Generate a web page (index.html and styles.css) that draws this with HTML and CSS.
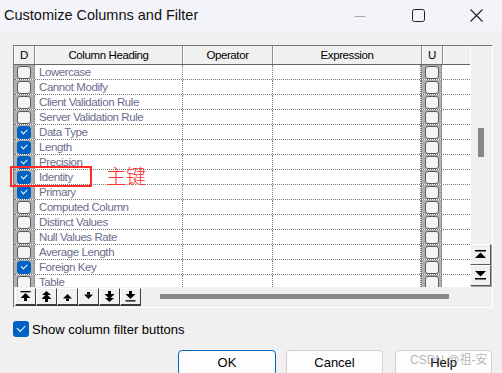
FILE: index.html
```html
<!DOCTYPE html>
<html>
<head>
<meta charset="utf-8">
<link rel="stylesheet" href="styles.css">
</head>
<body>
<div class="titlebar">
  <div class="title">Customize Columns and Filter</div>
  <div class="ctl"><svg width="12" height="12" viewBox="0 0 12 12"><line x1="0.5" y1="6.5" x2="11.5" y2="6.5" stroke="#a8a8a8" stroke-width="1"/></svg></div>
  <div class="ctl"><svg width="13" height="13" viewBox="0 0 13 13"><rect x="0.5" y="0.5" width="12" height="12" rx="2" fill="none" stroke="#1e1e1e" stroke-width="1"/></svg></div>
  <div class="ctl last"><svg width="13" height="13" viewBox="0 0 13 13"><path d="M0.5 0.5 L12.5 12.5 M12.5 0.5 L0.5 12.5" stroke="#1e1e1e" stroke-width="1.1"/></svg></div>
</div>

<div class="content">
  <div class="frame">
    <div class="main">
      <div class="grid">
        <div class="hrow">
          <div class="hc c-d">D</div>
          <div class="hc c-h">Column Heading</div>
          <div class="hc c-o">Operator</div>
          <div class="hc c-e">Expression</div>
          <div class="hc c-u">U</div>
          <div class="hc c-r"></div>
        </div>
        <div class="rows">
          <div class="row"><div class="c c-d g"><span class="cb"></span></div><div class="c c-h">Lowercase</div><div class="c c-o"></div><div class="c c-e"></div><div class="c c-u g"><span class="cb"></span></div><div class="c c-r"></div></div>
          <div class="row"><div class="c c-d g"><span class="cb"></span></div><div class="c c-h">Cannot Modify</div><div class="c c-o"></div><div class="c c-e"></div><div class="c c-u g"><span class="cb"></span></div><div class="c c-r"></div></div>
          <div class="row"><div class="c c-d g"><span class="cb"></span></div><div class="c c-h">Client Validation Rule</div><div class="c c-o"></div><div class="c c-e"></div><div class="c c-u g"><span class="cb"></span></div><div class="c c-r"></div></div>
          <div class="row"><div class="c c-d g"><span class="cb"></span></div><div class="c c-h">Server Validation Rule</div><div class="c c-o"></div><div class="c c-e"></div><div class="c c-u g"><span class="cb"></span></div><div class="c c-r"></div></div>
          <div class="row"><div class="c c-d g"><span class="cb on"></span></div><div class="c c-h">Data Type</div><div class="c c-o"></div><div class="c c-e"></div><div class="c c-u g"><span class="cb"></span></div><div class="c c-r"></div></div>
          <div class="row"><div class="c c-d g"><span class="cb on"></span></div><div class="c c-h">Length</div><div class="c c-o"></div><div class="c c-e"></div><div class="c c-u g"><span class="cb"></span></div><div class="c c-r"></div></div>
          <div class="row"><div class="c c-d g"><span class="cb on"></span></div><div class="c c-h">Precision</div><div class="c c-o"></div><div class="c c-e"></div><div class="c c-u g"><span class="cb"></span></div><div class="c c-r"></div></div>
          <div class="row"><div class="c c-d g"><span class="cb on"></span></div><div class="c c-h">Identity</div><div class="c c-o"></div><div class="c c-e"></div><div class="c c-u g"><span class="cb"></span></div><div class="c c-r"></div></div>
          <div class="row"><div class="c c-d g"><span class="cb on"></span></div><div class="c c-h">Primary</div><div class="c c-o"></div><div class="c c-e"></div><div class="c c-u g"><span class="cb"></span></div><div class="c c-r"></div></div>
          <div class="row"><div class="c c-d g"><span class="cb"></span></div><div class="c c-h">Computed Column</div><div class="c c-o"></div><div class="c c-e"></div><div class="c c-u g"><span class="cb"></span></div><div class="c c-r"></div></div>
          <div class="row"><div class="c c-d g"><span class="cb"></span></div><div class="c c-h">Distinct Values</div><div class="c c-o"></div><div class="c c-e"></div><div class="c c-u g"><span class="cb"></span></div><div class="c c-r"></div></div>
          <div class="row"><div class="c c-d g"><span class="cb"></span></div><div class="c c-h">Null Values Rate</div><div class="c c-o"></div><div class="c c-e"></div><div class="c c-u g"><span class="cb"></span></div><div class="c c-r"></div></div>
          <div class="row"><div class="c c-d g"><span class="cb"></span></div><div class="c c-h">Average Length</div><div class="c c-o"></div><div class="c c-e"></div><div class="c c-u g"><span class="cb"></span></div><div class="c c-r"></div></div>
          <div class="row"><div class="c c-d g"><span class="cb on"></span></div><div class="c c-h">Foreign Key</div><div class="c c-o"></div><div class="c c-e"></div><div class="c c-u g"><span class="cb"></span></div><div class="c c-r"></div></div>
          <div class="row"><div class="c c-d g"><span class="cb"></span></div><div class="c c-h">Table</div><div class="c c-o"></div><div class="c c-e"></div><div class="c c-u g"><span class="cb"></span></div><div class="c c-r"></div></div>
        </div>
      </div>
      <div class="vbar">
        <div class="track"><div class="vthumb"></div></div>
        <div class="vbtn"><svg width="11" height="9" viewBox="0 0 11 9"><rect x="0" y="0" width="11" height="1.5" fill="#000"/><polygon points="5.5,2.5 11,8 0,8" fill="#000"/></svg></div>
        <div class="vbtn"><svg width="11" height="9" viewBox="0 0 11 9"><polygon points="0,0 11,0 5.5,5.5" fill="#000"/><rect x="0" y="7" width="11" height="1.5" fill="#000"/></svg></div>
      </div>
    </div>
    <div class="hbar">
      <div class="tools">
        <div class="tb"><svg width="11" height="11" viewBox="0 0 11 11"><rect x="0.5" y="0" width="10" height="1.3" fill="#000"/><polygon points="5.5,2 10.5,7 0.5,7" fill="#000"/><rect x="4" y="7" width="3" height="3" fill="#000"/></svg></div>
        <div class="tb"><svg width="11" height="11" viewBox="0 0 11 11"><polygon points="5.5,0 10,4 1,4" fill="#000"/><polygon points="5.5,3 10.5,8 0.5,8" fill="#000"/><rect x="4" y="8" width="3" height="3" fill="#000"/></svg></div>
        <div class="tb"><svg width="11" height="11" viewBox="0 0 11 11"><polygon points="5.5,3 10,7.5 1,7.5" fill="#000"/><rect x="4" y="7.5" width="3" height="2.5" fill="#000"/></svg></div>
        <div class="tb"><svg width="11" height="11" viewBox="0 0 11 11"><rect x="4" y="1" width="3" height="2.5" fill="#000"/><polygon points="1,3.5 10,3.5 5.5,8" fill="#000"/></svg></div>
        <div class="tb"><svg width="11" height="11" viewBox="0 0 11 11"><rect x="4" y="0" width="3" height="3" fill="#000"/><polygon points="0.5,3 10.5,3 5.5,8" fill="#000"/><polygon points="1,7 10,7 5.5,11" fill="#000"/></svg></div>
        <div class="tb"><svg width="11" height="11" viewBox="0 0 11 11"><rect x="4" y="0" width="3" height="3" fill="#000"/><polygon points="0.5,3 10.5,3 5.5,8" fill="#000"/><rect x="0.5" y="9.2" width="10" height="1.3" fill="#000"/></svg></div>
      </div>
      <div class="hthumb"></div>
    </div>
  </div>

  <div class="showrow">
    <span class="bigcb"></span>
    <span class="showlabel">Show column filter buttons</span>
  </div>

  <div class="buttons">
    <div class="btn ok">OK</div>
    <div class="btn cancel">Cancel</div>
    <div class="btn help">Help</div>
  </div>
</div>

<div class="redbox"></div>
<div class="note">主键</div>
<div class="watermark">CSDN @祖-安</div>
</body>
</html>
```

FILE: styles.css
```css
html, body {
  margin: 0;
  padding: 0;
}
body {
  width: 502px;
  height: 373px;
  overflow: hidden;
  background: #f0f0f0;
  font-family: "Liberation Sans", Arial, sans-serif;
  position: relative;
}

/* title bar */
.titlebar {
  height: 31px;
  background: #f3f4f9;
  display: flex;
  align-items: center;
}
.title {
  flex: 1;
  padding-left: 4px;
  font-size: 14.5px;
  line-height: 31px;
  color: #111;
}
.ctl {
  width: 58px;
  height: 31px;
  display: flex;
  align-items: center;
  justify-content: center;
}
.ctl.last {
  margin-right: -3px;
}

/* content */
.content {
  padding: 14px 0 0 13px;
}
.frame {
  width: 480px;
  height: 263px;
  box-sizing: border-box;
  border: 1px solid;
  border-color: #7a7a7a #ffffff #ffffff #7a7a7a;
  display: flex;
  flex-direction: column;
}
.main {
  display: flex;
  height: 241px;
}
.grid {
  width: 456px;
  background: #ffffff;
  display: flex;
  flex-direction: column;
  overflow: hidden;
}
.hrow {
  display: flex;
  height: 18px;
  background: #f0f0f0;
  border-bottom: 1px solid #646464;
  flex: none;
}
.hc {
  box-sizing: border-box;
  font-size: 11.5px;
  letter-spacing: -0.4px;
  line-height: 19px;
  text-align: center;
  color: #000;
  border-right: 1px solid #8c8c8c;
  box-shadow: inset 1px 0 #ffffff;
}
.hc.c-r {
  border-right: none;
}
.c-d { width: 21px; }
.c-h { width: 148px; }
.c-o { width: 90px; }
.c-e { width: 149px; }
.c-u { width: 21px; }
.c-r { width: 27px; }

.rows {
  flex: 1;
  overflow: hidden;
}
.row {
  display: flex;
  height: 15px;
  box-sizing: border-box;
  border-bottom: 1px dotted #7c7c7c;
}
.c {
  box-sizing: border-box;
  height: 14px;
  border-right: 1px dotted #7c7c7c;
  font-size: 11.5px;
  letter-spacing: -0.42px;
  line-height: 15px;
  color: #6c6c8c;
  white-space: nowrap;
  overflow: hidden;
}
.c.c-h {
  padding-left: 4px;
}
.c.c-r {
  border-right: none;
}
.c.g {
  background: #b0b0b0;
  display: flex;
  justify-content: center;
  align-items: center;
}
.c.c-u.g {
  border-left: 1px dotted #7c7c7c;
}
.c.c-u {
  width: 21px;
}
.c.c-e {
  width: 148px;
}
.cb {
  width: 12px;
  height: 11px;
  border: 1px solid #5c5c5c;
  border-radius: 3px;
  background: #f4f4f4;
  position: relative;
  margin-top: 1px;
}
.cb.on {
  background: #0063c4;
  border-color: #0063c4;
}
.cb.on::after {
  content: "";
  position: absolute;
  left: 3px;
  top: 2px;
  width: 5px;
  height: 2.5px;
  border-left: 1px solid #fff;
  border-bottom: 1px solid #fff;
  transform: rotate(-45deg);
}

/* vertical scrollbar */
.vbar {
  width: 22px;
  display: flex;
  flex-direction: column;
  background: #f0f0f0;
  border-left: 1px solid #ffffff;
  box-sizing: border-box;
}
.track {
  height: 198px;
  flex: none;
}
.vthumb {
  margin: 82px 0 0 7px;
  width: 6px;
  height: 29px;
  background: #878787;
}
.vbtn {
  width: 21px;
  height: 21px;
  margin-left: -1px;
  box-sizing: border-box;
  border: 1px solid;
  border-color: #ffffff #5a5a5a #5a5a5a #ffffff;
  box-shadow: 1px 1px 0 #a0a0a0;
  background: #f0f0f0;
  display: flex;
  align-items: center;
  justify-content: center;
}

/* bottom strip */
.hbar {
  height: 20px;
  display: flex;
  background: #f0f0f0;
}
.tools {
  display: flex;
  margin-left: 1px;
  margin-top: 1px;
}
.tb {
  width: 21px;
  height: 18px;
  box-sizing: border-box;
  border: 1px solid;
  border-color: #ffffff #3c3c3c #3c3c3c #ffffff;
  border-bottom-width: 2px;
  background: #f0f0f0;
  display: flex;
  align-items: center;
  justify-content: center;
}
.hthumb {
  margin: 7px 0 0 19px;
  width: 289px;
  height: 5px;
  background: #878787;
}

/* show filter checkbox */
.showrow {
  display: flex;
  align-items: center;
  margin-top: 13px;
  height: 16px;
}
.bigcb {
  width: 16px;
  height: 16px;
  border-radius: 3px;
  background: #0063c4;
  position: relative;
  flex: none;
}
.bigcb::after {
  content: "";
  position: absolute;
  left: 4px;
  top: 4px;
  width: 7px;
  height: 3.5px;
  border-left: 1.2px solid #fff;
  border-bottom: 1.2px solid #fff;
  transform: rotate(-45deg);
}
.showlabel {
  margin-left: 3px;
  font-size: 13px;
  line-height: 16px;
  color: #000;
  padding-top: 1px;
}

/* dialog buttons */
.buttons {
  display: flex;
  margin-top: 13px;
  padding-left: 165px;
}
.btn {
  height: 26px;
  box-sizing: border-box;
  border: 1px solid #d0d0d0;
  border-radius: 4px;
  background: #fdfdfd;
  font-size: 13px;
  line-height: 16px;
  padding-top: 4px;
  text-align: center;
  color: #000;
}
.btn.ok {
  width: 98px;
  border-color: #0067c0;
}
.btn.cancel {
  width: 97px;
  margin-left: 10px;
}
.btn.help {
  width: 97px;
  margin-left: 12px;
}

/* annotations */
.redbox {
  position: absolute;
  left: 10px;
  top: 166px;
  width: 82px;
  height: 21px;
  box-sizing: border-box;
  border: 2px solid #ff2b2b;
}
.note {
  position: absolute;
  left: 106px;
  top: 163px;
  font-family: "Noto Sans CJK SC", sans-serif;
  font-weight: 300;
  font-size: 20px;
  line-height: 26px;
  color: #ff3030;
}
.watermark {
  position: absolute;
  left: 410px;
  top: 353px;
  font-family: "Liberation Sans", "Noto Sans CJK SC", sans-serif;
  font-size: 12px;
  line-height: 14px;
  color: rgba(120, 120, 120, 0.55);
}
```
